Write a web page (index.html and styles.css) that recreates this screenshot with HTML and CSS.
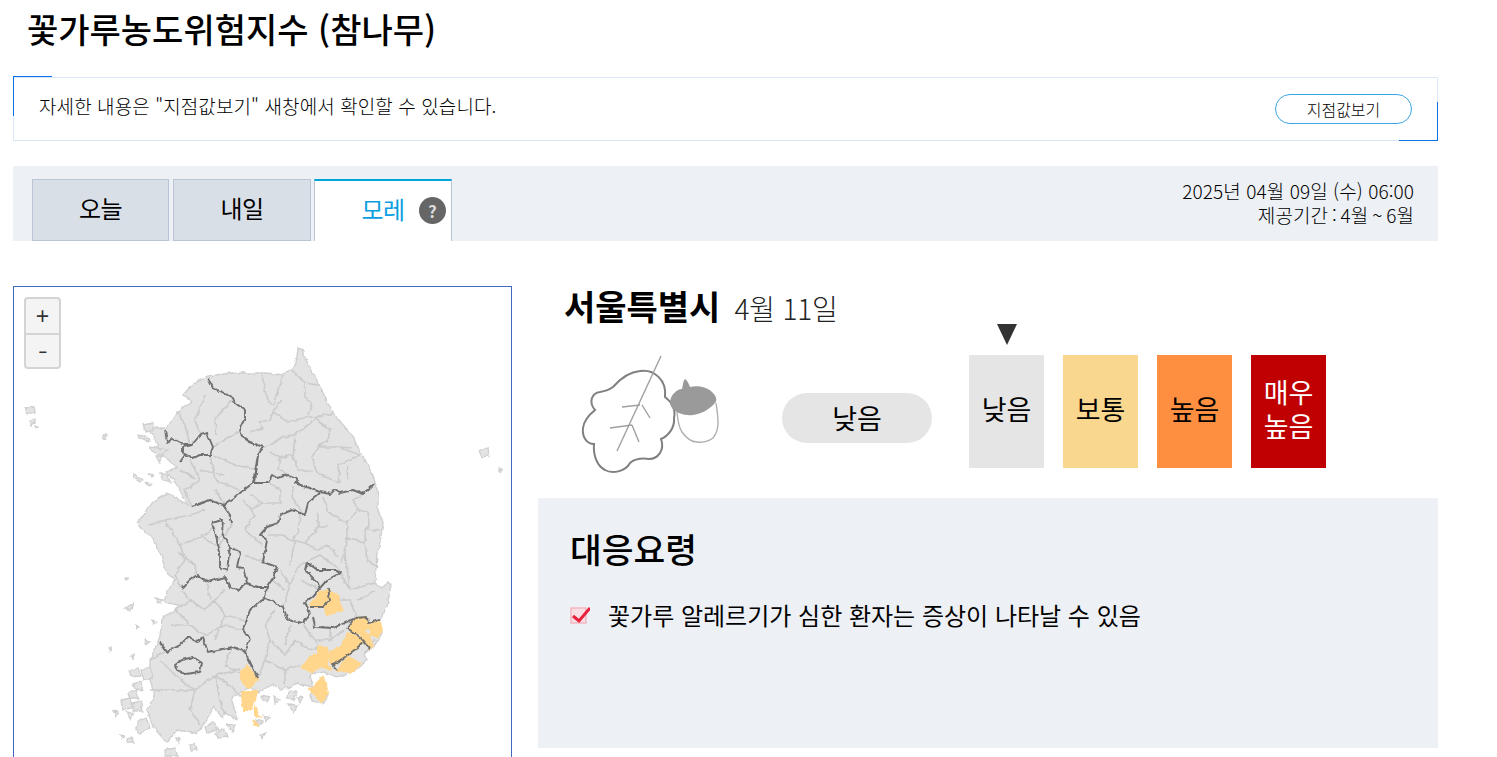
FILE: index.html
```html
<!DOCTYPE html>
<html lang="ko">
<head>
<meta charset="utf-8">
<title>꽃가루농도위험지수</title>
<link rel="stylesheet" href="styles.css">
</head>
<body>
<div class="page">
  <h1 class="title">꽃가루농도위험지수 (참나무)</h1>
  <div class="notice">
    <p class="notice-text">자세한 내용은 "지점값보기" 새창에서 확인할 수 있습니다.</p>
    <button class="notice-btn">지점값보기</button>
  </div>
  <div class="tabbar">
    <div class="tabs">
      <div class="tab">오늘</div>
      <div class="tab">내일</div>
      <div class="tab tab-active">모레<span class="help">?</span></div>
    </div>
    <div class="dates">
      <div>2025년 04월 09일 (수) 06:00</div>
      <div class="period">제공기간 : 4월 ~ 6월</div>
    </div>
  </div>
  <div class="content">
    <div class="map">
      <div class="zoom"><div class="zoom-btn">+</div><div class="zoom-btn zoom-minus">−</div></div>
      <svg class="map-svg" viewBox="13 286 498 480" width="498" height="480" aria-hidden="true">
        <defs>
          <filter id="rough" x="-5%" y="-5%" width="110%" height="110%">
            <feTurbulence type="fractalNoise" baseFrequency="0.17" numOctaves="2" seed="4"/>
            <feDisplacementMap in="SourceGraphic" scale="4" xChannelSelector="R" yChannelSelector="G"/>
            <feGaussianBlur stdDeviation="0.35"/>
          </filter>
        </defs>
        <g filter="url(#rough)">
          <path class="land" d="M208 376L232 373 250 373 267 373 280 375 292 369 296 363 298 348 302 349 308 365 318 383 333 413 352 435 363 457 373 475 378 493 378 510 383 522 380 543 377 553 375 583 382 588 388 582 391 585 387 607 380 620 382 633 373 648 365 652 367 660 360 667 350 673 337 677 323 672 310 675 313 687 297 683 290 687 280 690 273 683 263 690 258 693 250 687 238 693 231 698 238 720 225 712 222 718 214 706 207 720 197 733 177 730 167 743 153 727 147 710 155 697 150 680 150 660 160 637 162 618 182 606 164 602 167 592 175 580 167 573 160 553 152 537 142 530 137 523 153 502 167 493 188 505 177 485 167 472 177 468 160 452 150 428 167 428 177 412 192 402 183 395 192 385Z"/>
          <path class="land" d="M25 408L34 407 35 412 28 414ZM30 421L35 419 35 423 31 425ZM35 426L38 427 36 428ZM103 435L107 435 106 439 104 438ZM479 451L488 448 489 456 482 457ZM499 469L501 469 501 471 499 471ZM143 425L153 423 153 430 145 431ZM139 435L150 439 148 441 140 438ZM150 447L168 450 160 455 152 451ZM156 456L163 456 159 463ZM133 473L142 480 140 482 134 478ZM145 482L152 484 150 486ZM149 474L154 475 152 477ZM160 473L168 475 170 482 162 479ZM129 671L138 668 141 676 131 677ZM141 670L150 667 153 677 144 680ZM133 684L141 681 143 690 135 689ZM128 693L136 690 139 698 130 698ZM121 700L130 698 132 708 123 710ZM132 703L141 701 142 711 134 711ZM126 712L133 713 131 720ZM137 722L146 718 150 727 141 734 136 730ZM113 711L118 712 116 716ZM126 738L131 736 134 743 128 743ZM165 750L175 748 178 756 165 756ZM190 745L195 743 197 749 191 750ZM176 738L180 739 178 743ZM216 733L224 729 228 737 218 738ZM205 727L213 722 218 730 207 733ZM227 725L235 726 232 732ZM256 720L262 722 259 726ZM264 715L270 718 266 722ZM262 695L270 697 267 702 263 700ZM274 696L280 700 275 704ZM289 691L297 692 294 700 288 698ZM298 697L303 698 300 703ZM288 704L298 705 294 713ZM310 695L322 682 328 695 322 704 312 701ZM260 735L265 733 263 738ZM145 640L149 642 146 644ZM136 625L139 627 137 629ZM131 655L134 654 133 659ZM108 648L111 647 110 651ZM125 608L134 603 130 611ZM155 598L163 600 158 603ZM152 620L157 622 154 624ZM125 578L128 578 127 580ZM120 735L124 736 122 739Z"/>
          <path class="light" fill="none" d="M262 375L267 400 273 405 283 375M282 400L273 412 270 420 260 422 263 428 250 432M273 412L288 422 307 417 318 417 333 413M292 370L305 383 318 385M305 383L305 397 312 403 308 415M317 420L330 430 328 440 318 447 312 457 317 473 340 483M295 435L293 457 298 470 312 472M317 418L295 435 283 437 263 448M270 452L280 458 278 468 288 475M280 458L292 455M318 447L338 447 352 448M338 447L360 455M360 455L338 465 340 483M347 467L348 480M323 497L328 513 347 522 358 510 353 500 363 494M358 510L368 512 369 527 365 530 380 530M365 530L365 543 347 537 347 522M347 537L345 553 340 563M365 543L367 560 377 567M293 487L292 497 303 513M318 512L318 527 328 525M300 515L298 530 293 540 305 543 318 550 328 545 338 557M318 527L305 543M268 535L283 535 293 542M270 483L280 490 280 503 263 503 250 510M250 495L263 503M232 400L215 420 216 435M205 395L195 420 200 435M177 412L185 425 190 445M240 430L225 440 213 447M213 455L235 465 258 470M190 460L200 480 185 490 192 507M210 455L215 480 240 490M200 470L225 475M215 490L225 505M180 470L195 478M165 520L180 545 185 560 175 575 182 588M180 545L205 535 215 525M178 552L195 565 197 575M200 535L215 545 222 533M150 525L165 520 190 515 205 510M182 590L190 600 205 610 215 600 225 590M207 582L210 600M215 600L225 615 245 620M190 600L175 610 190 625 205 635 225 625 243 630M170 625L190 625M225 615L215 640M160 660L180 680 195 690 215 675 235 690 245 700M150 660L165 652M195 690L190 710 200 725M215 675L220 700 225 715M165 690L195 690M165 690L150 690M240 670L215 675M232 647L225 665 240 673M258 678L265 660 270 640 285 655 295 640 310 650 318 647M270 640L265 625 275 610M290 625L285 645M303 625L315 640 330 640 345 630M265 660L285 670 300 665M285 670L285 685M315 640L318 647M330 628L330 640M283 607L290 585 280 570M290 585L300 565 320 555 340 570M295 540L290 565M340 573L350 590 375 583M330 600L350 600 358 620M320 590L300 580M345 555L350 590M358 600L375 590M243 500L255 515 245 530 262 545M232 523L220 545M262 562L245 555M272 580L285 590M375 640L365 652"/>
          <path class="yellow" d="M310 605L320 592 328 590 330 600 323 607 313 608ZM330 592L337 595 340 605 343 610 327 615 325 608ZM355 618L367 617 368 627 362 633 353 633 348 628ZM370 622L380 622 382 630 377 637 370 635ZM362 633L368 635 373 647 370 648 360 637ZM348 633L360 638 363 643 348 655 340 648ZM337 647L348 655 333 665 327 655ZM348 657L360 663 350 673 337 670ZM318 647L327 648 327 667 333 670 318 667 313 673 302 667 310 657 318 655ZM310 690L323 677 328 693 320 703 317 697ZM247 665L258 680 248 688 242 680 240 673ZM242 692L257 692 253 703 250 710 243 710ZM255 708L260 717 255 715ZM253 720L258 725 256 725Z"/>
          <path class="dark" fill="none" d="M208 378L213 388 222 392 233 398 235 403 245 410 245 418 240 428 242 437 250 442 263 447 258 455 255 483 268 483 272 475 277 478 288 475 298 480 295 483 320 492 330 494 333 490 340 493 353 490 363 494 374 484M165 430L167 442 173 439 185 445 192 445 200 435 207 433 213 447 210 455 200 455 192 458 183 453 183 447 192 445M185 455L180 462M192 507L210 500 223 505 240 493 253 483 258 455M223 505L230 515 232 523M320 493L308 503 305 515 292 510 280 515 278 523 267 527 260 535 267 540 263 562 277 567 273 578 267 587 265 598 250 610 243 630 250 640 245 652 258 678M223 520L222 533 230 547 240 552 237 567 243 568 247 583 238 590 230 588 225 577 207 582 197 575 190 580 182 588M212 523L217 540 220 552 220 567 227 570 230 547M222 520L212 523M247 583L257 587 267 587M265 598L283 607 288 620 303 623 310 613 305 602 312 597 320 588 327 580 340 573 337 570 317 570 307 562 305 570 318 583 320 590M328 588L330 600 323 607 310 607M313 617L315 627 333 628 347 622 355 618 367 617 368 623 380 620M355 618L347 628 360 637 370 648M363 643L348 655 333 665 337 670M160 642L167 652 180 645 188 637 197 642 203 638 208 652 233 647 245 652M175 665L182 660 193 657 202 663 200 672 185 674 177 670Z"/>
        </g>
      </svg>
    </div>
    <div class="detail">
      <div class="heading"><span class="city">서울특별시</span><span class="day">4월 11일</span></div>
      <div class="status">
        <svg class="leaf" viewBox="575 350 150 125" width="150" height="125" aria-hidden="true">
          <path class="leaf-line" d="M595 410C588 402 592 393 600 392C606 391 609 390 613 387C620 379 628 372 640 371C654 369 667 380 665 397C672 402 676 410 674 418C675 428 668 436 661 439C665 450 658 459 649 459C642 458 636 458 630 463C625 472 612 474 605 470C597 466 593 455 594 444C586 444 582 436 583 428C584 420 590 414 595 410Z"/>
          <path class="vein" d="M661 356L617 451M640 405L622 407M642 405L650 418M632 425L610 428M632 425L639 442"/>
          <path class="shell" d="M677 412C678 424 680 429 682 432C687 439 692 442 697 442C704 443 709 441 713 438C717 433 718 428 718 423C718 415 717 410 716 403"/>
          <path class="cap" d="M682 389C683 385 683 381 685 379C687 380 689 384 690 387C698 385 708 387 713 393C717 397 717 401 715 403C708 411 700 414 693 415C685 416 676 413 672 408C668 402 671 394 678 390C680 389 681 389 682 389Z"/>
        </svg>
        <div class="pill">낮음</div>
        <div class="levels">
          <div class="level level-low"><span class="arrow"></span>낮음</div>
          <div class="level level-mid">보통</div>
          <div class="level level-high">높음</div>
          <div class="level level-top">매우<br>높음</div>
        </div>
      </div>
      <div class="panel">
        <h2 class="panel-title">대응요령</h2>
        <div class="advice">
          <svg class="check" viewBox="0 0 20 20" width="20" height="20" aria-hidden="true">
            <rect class="check-box" x="1" y="3" width="15" height="15"/>
            <path class="check-mark" d="M3 11L9 16 20 3"/>
          </svg>
          <span>꽃가루 알레르기가 심한 환자는 증상이 나타날 수 있음</span>
        </div>
      </div>
    </div>
  </div>
</div>
</body>
</html>
```
FILE: styles.css
```css
* { box-sizing: border-box; }
html, body { margin: 0; height: 757px; overflow: hidden; background: #fff; }
body { font-family: "Noto Sans CJK KR", "Noto Sans", sans-serif; color: #000; }
.page { width: 1425px; margin-left: 13px; }
.title { margin: 0 0 0 14px; height: 76px; padding-top: 4px; font-size: 34px; line-height: 50px; font-weight: 500; }
.notice { position: relative; height: 64px; margin-top: 1px; border: 1px solid #dbe6f8; display: flex; justify-content: space-between; padding: 16px 25px 0 25px; }
.notice::before { content: ""; position: absolute; left: -1px; top: -2px; width: 38px; height: 39px; border-left: 1px solid #0b72e7; border-top: 1px solid #0b72e7; }
.notice::after { content: ""; position: absolute; right: -1px; bottom: -1px; width: 38px; height: 38px; border-right: 1px solid #0b72e7; border-bottom: 1px solid #0b72e7; }
.notice-text { margin: 0; font-size: 19px; font-weight: 300; line-height: 24px; letter-spacing: 0.09px; color: #000; }
.notice-btn { width: 137px; height: 30px; background: #fff; border: 1px solid #3aa5e5; border-radius: 15px; font-family: inherit; font-size: 16px; font-weight: 300; line-height: 26px; color: #000; padding: 0; }
.tabbar { height: 75px; margin-top: 25px; background: #edf0f5; display: flex; justify-content: space-between; padding: 13px 24px 0 19px; }
.tabs { display: flex; gap: 4px; }
.tab { width: 137px; height: 62px; border: 1px solid #b9c5d5; background: #d9dfe7; font-size: 24px; line-height: 56px; text-align: center; letter-spacing: -0.5px; }
.tab + .tab { width: 138px; }
.tab:last-child { margin-left: -1px; }
.tab-active { position: relative; background: #fff; border-top: 2px solid #00a5d8; border-bottom: 0; color: #0a9ee0; line-height: 55px; }
.help { position: absolute; left: 104px; top: 16px; width: 27px; height: 27px; border-radius: 50%; background: #666; color: #ddd; font-size: 17px; font-weight: 700; line-height: 27px; text-align: center; letter-spacing: 0; }
.dates { text-align: right; font-size: 19px; font-weight: 300; line-height: 24px; letter-spacing: 0.08px; color: #000; }
.period { word-spacing: -1.6px; }
.content { display: flex; gap: 26px; margin-top: 45px; align-items: flex-start; }
.map { position: relative; width: 499px; height: 490px; border: 1px solid #4169c0; flex: none; }
.map-svg { display: block; position: absolute; left: -1px; top: -1px; }
.zoom { position: absolute; left: 10px; top: 10px; width: 37px; height: 72px; border: 2px solid #d4d4d4; border-radius: 4px; background: #f4f4f4; z-index: 1; }
.zoom-btn { height: 34px; font: 400 23px/34px "Liberation Sans", sans-serif; text-align: center; color: #333; }
.zoom-minus { border-top: 2px solid #d4d4d4; height: 35px; font-size: 14px; font-weight: 700; }
.land { fill: #e3e3e3; stroke: #cfcfcf; stroke-width: 1.3; }
.light { stroke: #cbcbcb; stroke-width: 1.6; stroke-linejoin: round; }
.yellow { fill: #ffd68c; stroke: #ffd68c; stroke-width: 2; }
.dark { stroke: #6f6f6f; stroke-width: 1.9; stroke-linejoin: round; }
.detail { width: 900px; flex: none; }
.heading { height: 64px; padding-left: 26px; display: flex; align-items: baseline; gap: 14px; }
.city { font-size: 34px; line-height: 40px; font-weight: 700; }
.day { font-size: 28px; font-weight: 300; line-height: 40px; color: #222; letter-spacing: -0.2px; }
.status { position: relative; height: 148px; display: flex; align-items: flex-start; padding-left: 37px; }
.leaf { flex: none; }
.leaf-line { fill: #fff; stroke: #808080; stroke-width: 2; }
.vein { fill: none; stroke: #a0a0a0; stroke-width: 1.4; }
.cap { fill: #9a9a9a; }
.shell { fill: #fff; stroke: #b0b0b0; stroke-width: 1.4; }
.pill { flex: none; width: 150px; height: 50px; margin: 43px 0 0 57px; border-radius: 25px; background: #e5e5e5; text-align: center; font-size: 27px; line-height: 50px; }
.levels { display: flex; gap: 19px; margin: 5px 0 0 37px; }
.level { position: relative; width: 75px; height: 113px; padding-bottom: 5px; display: flex; align-items: center; justify-content: center; text-align: center; font-size: 27px; line-height: 34px; }
.level-low { background: #e5e5e5; }
.level-mid { background: #fad78e; }
.level-high { background: #ff8f40; }
.level-top { background: #c00000; color: #fff; }
.arrow { position: absolute; left: 28px; top: -31px; border-left: 10.5px solid transparent; border-right: 10.5px solid transparent; border-top: 21px solid #333; }
.panel { height: 250px; background: #edf0f5; padding: 22px 32px; }
.panel-title { margin: 0; font-size: 34.5px; line-height: 56px; font-weight: 500; }
.advice { display: flex; align-items: center; gap: 18px; margin-top: 21px; font-size: 24px; line-height: 36px; }
.check { flex: none; }
.check-box { fill: #f7dfe4; stroke: #f3b4c0; stroke-width: 1.4; }
.check-mark { fill: none; stroke: #e8203a; stroke-width: 3; }
```
